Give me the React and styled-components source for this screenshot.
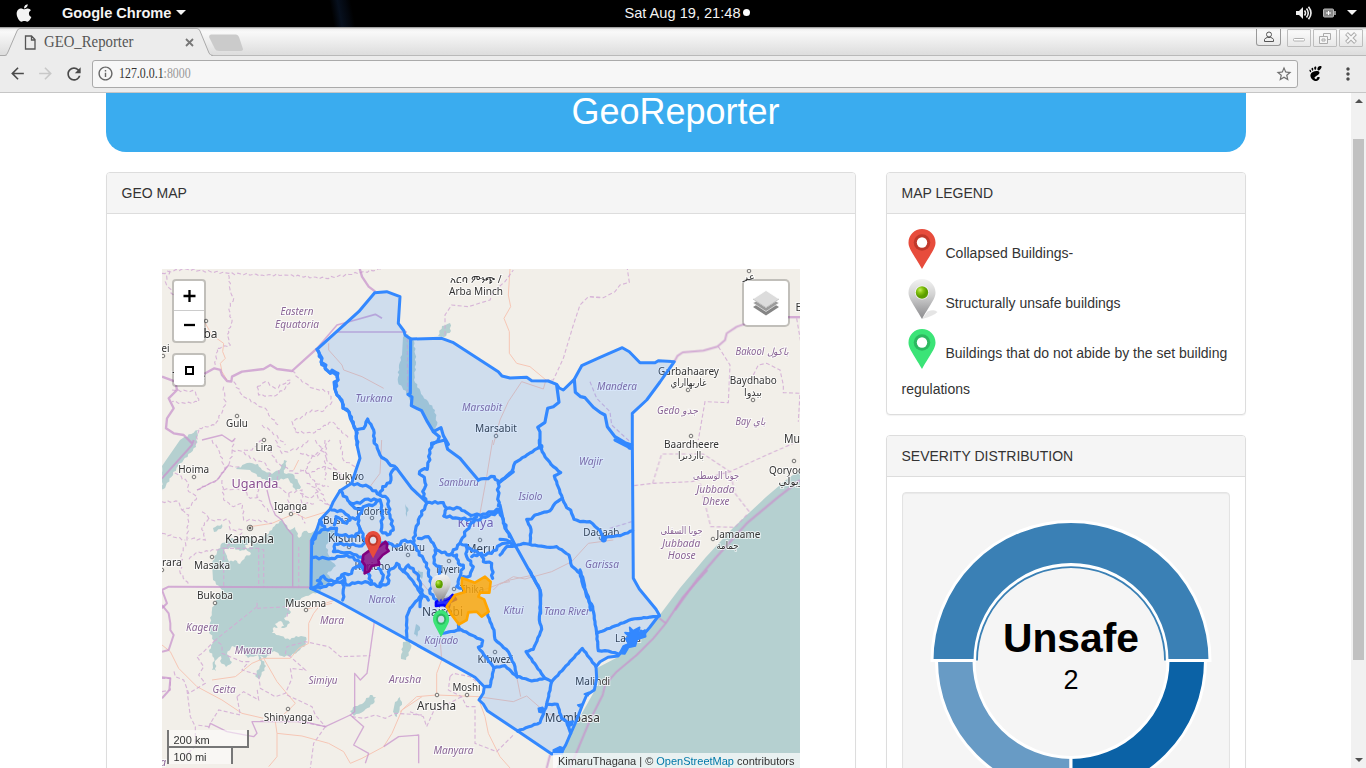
import React from "react";
import styled, { createGlobalStyle } from "styled-components";
import { FaApple } from "react-icons/fa";
import { SiGnome } from "react-icons/si";
import { MdArrowBack, MdArrowForward, MdRefresh, MdInfoOutline, MdStarBorder, MdMoreVert } from "react-icons/md";

const Global = createGlobalStyle`
  *, *::before, *::after { box-sizing: border-box; }
  body { margin: 0; background: #fff; overflow: hidden; }
`;

const Screen = styled.div`
  width: 1366px;
  height: 768px;
  overflow: hidden;
  display: flex;
  flex-direction: column;
  font-family: "Liberation Sans", Arial, sans-serif;
  font-size: 14px;
  line-height: 20px;
  color: #333;
`;

/* Desktop bar */
const DesktopBar = styled.header`
  flex: none;
  height: 27px;
  display: grid;
  grid-template-columns: 1fr auto 1fr;
  align-items: center;
  padding: 0 9px 2px 14px;
  background: linear-gradient(80deg, transparent 329px, #07101e 337px, #03070e 345px, transparent 350px) #000;
  color: #f4f4f4;
  font-size: 14.6px;
`;
const BarGroup = styled.div`
  display: flex;
  align-items: center;
  gap: ${(p) => p.$gap || 0}px;
  justify-content: ${(p) => (p.$end ? "flex-end" : "flex-start")};
`;
const AppName = styled.strong`
  margin: 0 5px 0 28px;
  white-space: nowrap;
`;
const Clock = styled.div`
  display: flex;
  align-items: center;
  gap: 2px;
  margin-left: 3px;
`;
const Dot = styled.i`
  width: 7px;
  height: 7px;
  border-radius: 50%;
  background: #fff;
`;

/* Browser frame */
const TabStrip = styled.div`
  flex: none;
  height: 29px;
  display: flex;
  background: linear-gradient(#8a8a8a 0, #f0f0f0 2px, #f9f9f9 5px, #dedede 27px);
  border-bottom: 1px solid #b9b9b9;
`;
const Tab = styled.div`
  position: relative;
  width: 214px;
  height: 29px;
  display: flex;
  align-items: center;
  padding: 1px 0 0 24px;
`;
const TabShape = styled.svg`
  position: absolute;
  left: 0;
  top: 0;
`;
const TabTitle = styled.span`
  position: relative;
  width: 141px;
  margin-left: 8px;
  font: 16.5px/20px "Liberation Serif", serif;
  color: #555;
`;
const Squeeze = styled.span`
  display: inline-block;
  transform: scaleX(${(p) => p.$x});
  transform-origin: 0 50%;
`;
const TabIcon = styled.svg`
  position: relative;
  flex: none;
`;
const WindowButtons = styled.div`
  display: flex;
  gap: 2px;
  margin: 2px 3px 0 auto;
`;
const WindowButton = styled.span`
  width: 24px;
  height: 18px;
  display: grid;
  place-items: center;
  border: 1px solid #bdbdbd;
  border-radius: 1px;
`;
const ProfileButton = styled(WindowButton)`
  width: 25px;
  height: 17px;
  margin-right: 4px;
  border-color: #999;
  border-top: 0;
  border-radius: 0 0 3px 3px;
`;
const Toolbar = styled.div`
  flex: none;
  height: 37px;
  display: flex;
  align-items: center;
  padding: 0 8px 1px;
  background: #ececec;
  border-bottom: 1px solid #c6c6c6;
  color: #4a4a4a;
  svg { flex: none; }
`;
const Omnibox = styled.div`
  flex: 1;
  height: 28px;
  margin: 0 10px 0 8px;
  padding: 0 4px;
  display: flex;
  align-items: center;
  background: #f7f7f7;
  border: 1px solid #aaa;
  border-radius: 3px;
`;
const Url = styled.span`
  flex: 1;
  margin: -2px 0 0 5px;
  font: 14.5px/20px "Liberation Serif", serif;
  color: #333;
`;
const Port = styled.span`
  color: #999;
`;

/* Page */
const Viewport = styled.div`
  flex: 1;
  min-height: 0;
  display: flex;
`;
const Page = styled.main`
  width: 1351px;
  overflow: hidden;
`;
const Container = styled.div`
  width: 1140px;
  margin: 0 auto;
`;
const Banner = styled.h1`
  height: 59px;
  margin: 0 0 20px;
  border-radius: 0 0 20px 20px;
  background: #3aacef;
  color: #fff;
  text-align: center;
  font-size: 36px;
  font-weight: 400;
  line-height: 37px;
`;
const Columns = styled.div`
  display: grid;
  grid-template-columns: 750px 360px;
  gap: 30px;
  align-items: start;
`;
const Panel = styled.section`
  margin-bottom: 20px;
  background: #fff;
  border: 1px solid #ddd;
  border-radius: 4px;
  box-shadow: 0 1px 1px rgba(0, 0, 0, 0.05);
`;
const PanelHeading = styled.div`
  padding: 10px 15px;
  background: #f5f5f5;
  border-bottom: 1px solid #ddd;
  border-radius: 3px 3px 0 0;
`;
const PanelBody = styled.div`
  padding: ${(p) => p.$pad || 15}px;
`;
const LegendRow = styled.div`
  display: flex;
  gap: 4px;
  height: 50px;
  white-space: nowrap;
`;
const LegendText = styled.span`
  margin-top: 14px;
`;
const Well = styled.div`
  height: 340px;
  border: 1px solid #e3e3e3;
  border-radius: 4px;
  background: #f5f5f5;
  box-shadow: inset 0 1px 1px rgba(0, 0, 0, 0.05);
`;
const Scrollbar = styled.div`
  width: 15px;
  display: flex;
  flex-direction: column;
  align-items: center;
  justify-content: space-between;
  padding: 6px 0 6px;
  background: #f1f1f1;
`;
const Thumb = styled.div`
  width: 11px;
  height: 521px;
  margin: -62px 0 0;
  background: #c1c1c1;
`;
const Caret = styled.i`
  border: solid transparent;
  border-width: 0 ${(p) => p.$w || 4}px;
  ${(p) => (p.$up ? "border-bottom" : "border-top")}: ${(p) => p.$w || 4}px solid ${(p) => p.$color || "#505050"};
`;

/* Map */
const MapFrame = styled.div`
  position: relative;
  height: 500px;
  overflow: hidden;
  background: #f2efe9;
`;
const MapSvg = styled.svg`
  display: block;
  font-family: "Noto Sans", "DejaVu Sans", sans-serif;
`;
const ControlStack = styled.div`
  position: absolute;
  left: 10px;
  top: 10px;
  display: flex;
  flex-direction: column;
  gap: 10px;
`;
const ControlBox = styled.div`
  border: 2px solid rgba(0, 0, 0, 0.2);
  border-radius: 4px;
  background: #fff;
  background-clip: padding-box;
`;
const ControlButton = styled.div`
  width: 30px;
  height: 30px;
  display: grid;
  place-items: center;
  &:not(:last-child) { border-bottom: 1px solid #ccc; }
`;
const LayersBox = styled(ControlBox)`
  position: absolute;
  right: 10px;
  top: 10px;
  width: 48px;
  height: 48px;
  display: grid;
  place-items: center;
  border-radius: 5px;
`;
const ScaleStack = styled.div`
  position: absolute;
  left: 5px;
  bottom: 5px;
  font-size: 11px;
  line-height: 12px;
`;
const ScaleLine = styled.div`
  width: ${(p) => p.$w}px;
  height: ${(p) => (p.$top ? 18 : 16)}px;
  padding: ${(p) => (p.$top ? 4 : 3)}px 5px 0 5px;
  border: 2px solid #777;
  border-top: 0;
  ${(p) => !p.$top && "border-bottom: 0;"}
  background: rgba(255, 255, 255, 0.5);
  white-space: nowrap;
`;
const Attribution = styled.div`
  position: absolute;
  right: 0;
  bottom: 0;
  padding: 0 5px;
  font-size: 11px;
  line-height: 16px;
  white-space: nowrap;
  background: rgba(255, 255, 255, 0.7);
`;
const Link = styled.a`
  color: #0078a8;
`;

const PIN = "M13.5 0C6 0 0 6 0 13.5c0 6 4 10 13.5 26.5C23 23.5 27 19.5 27 13.5 27 6 21 0 13.5 0z";

const PinShape = ({ color, ring, hole = "#fff" }) => (
  <g>
    <path d={PIN} fill={color} />
    <circle cx="13.5" cy="13.5" r="8.3" fill={ring} />
    <circle cx="13.5" cy="13.5" r="5.2" fill={hole} />
  </g>
);
const SilverPin = () => (
  <g>
    <path d="M13.5 40L19 32.500Q26 30 29 33Q25 37 13.5 40z" fill="#999" opacity=".25" />
    <path d={PIN} fill="url(#silver)" />
    <circle cx="13.5" cy="13.5" r="7" fill="#f4f4f4" />
    <circle cx="13.5" cy="13.5" r="6.2" fill="url(#lime)" />
  </g>
);
const LegendPin = ({ children }) => (
  <svg width="40" height="40" viewBox="-6.5 0 40 40" overflow="visible">{children}</svg>
);

/* Adds small, repeatable bends along each segment so that surveyed borders and shores look natural. */
const roughen = (points, step, amount) => {
  const nodes = points.split(" ").map((pair) => pair.split(",").map(Number));
  const out = [nodes[0]];
  for (let i = 1; i < nodes.length; i += 1) {
    const [ax, ay] = nodes[i - 1];
    const [bx, by] = nodes[i];
    const length = Math.hypot(bx - ax, by - ay) || 1;
    const parts = Math.max(1, Math.round(length / step));
    for (let k = 1; k < parts; k += 1) {
      const t = k / parts;
      const shift = Math.sin(ax * 12.9 + by * 7.3 + k * 2.4) * amount;
      out.push([ax + (bx - ax) * t - ((by - ay) / length) * shift, ay + (by - ay) * t + ((bx - ax) / length) * shift]);
    }
    out.push([bx, by]);
  }
  return out.map(([x, y]) => `${x.toFixed(1)},${y.toFixed(1)}`).join(" ");
};

/* Each sheet of the map is digitised at three units per pixel from its own origin. */
const Sheet = ({ x, y, ...rest }) => <g transform={`translate(${x} ${y}) scale(.33333)`} {...rest} />;
const Lines = ({ of, rough = 0 }) => of.map((points) => <polyline key={points} points={rough ? roughen(points, 9, rough) : points} />);

const OUTLINE =
  "317,349.3 358.7,311.7 374.7,292.7 386.7,291.7 400,296.7 398.3,323.3 404,331 405,335 410.7,339 441.7,338.3 452.7,342.3 498.3,371.7 502,376 510,378 526.7,377.3 531.7,380.7 548.3,381 556.7,384.3 559.3,388 563.3,390 574.3,379.3 581.7,365.7 600,357.3 622.3,347.7 629.3,351.7 640,362.7 655,362.7 658.3,360.7 674.3,361.7 660,382 646.7,400 632.3,413.3 632.3,440 633.3,578.3 639.3,589 656,609.3 659.3,615 656.7,618.3 650,627 645,633 641,631 638,638 633,640 628,645 623,650 618,656 608,657.3 600,661.7 596,666.7 596.7,678.3 594.3,690 586.7,695 581.7,706.7 576.7,720 570.7,733.3 565.7,745 562.7,750 551.7,754 517.7,731 487.3,710.7 483.3,704 479,700 483.3,693.3 484.3,686.7 475,677.3 406.7,639.3 335.3,600 311,588.3 311.7,540 316.7,530 320,520 330,509.3 333.3,501.7 340,490.7 351.7,483.3 356,470 360,458.3 357,445 356,430 350.3,418.3 348.7,411.7 343,408 342,400 337,395 334.7,388.3 334,382 338,380 337,373 332,370 330,373 325,368 326,365 321,362 322,358 319,353";

const CITY = "#333";
const AREA = "#8a6596";
/* text, centre x, baseline y, width, size, colour, italic */
const LABELS = [
  ["Eastern", 297, 315, 33, 10, AREA, 1], ["Equatoria", 297, 327.5, 44, 10, AREA, 1],
  ["አርባ ምንጭ /", 475.5, 282.5, 52, 10, CITY], ["Arba Minch", 476, 295, 54, 10.5, CITY],
  ["ba", 210.5, 338, 14, 12, CITY], ["ei", 165.5, 352, 8, 10, CITY], ["T", 176, 380, 7, 10, CITY], ["e", 202, 380, 6, 10, CITY],
  ["Gulu", 237, 427, 22, 10.5, CITY], ["Lira", 264, 451, 17, 10.5, CITY], ["Hoima", 193.7, 473, 31, 10.5, CITY],
  ["Uganda", 255, 488, 47, 12, "#8a4f92"], ["Iganga", 290.5, 510, 33, 10.5, CITY], ["Kampala", 249.5, 543, 49, 13, CITY],
  ["rara", 172, 566, 20, 10.5, CITY], ["Masaka", 212, 569, 36, 10.5, CITY], ["Bukoba", 215, 599, 36, 10.5, CITY],
  ["Musoma", 305.7, 606.5, 41, 10.5, CITY], ["Turkana", 374, 401.5, 37, 10, AREA, 1], ["Marsabit", 482, 410.5, 40, 10, AREA, 1],
  ["Marsabit", 496, 432, 42, 10.5, CITY], ["Mandera", 617, 389.5, 40, 10, AREA, 1], ["Garbahaarey", 688.5, 374.5, 61, 10.5, CITY],
  ["غاربهااراي", 688.5, 386, 36, 10, CITY], ["Baydhabo", 753.3, 384, 47, 10.5, CITY], ["بيدوا", 753, 395.5, 18, 10, CITY],
  ["عر", 749, 280, 12, 10, CITY], ["Bakool باكول", 762, 355, 53, 10, AREA, 1], ["Gedo جدو", 677.5, 414, 41, 10, AREA, 1],
  ["Bay باي", 750.5, 425, 30, 10, AREA, 1], ["Baardheere", 691.5, 447.5, 55, 10.5, CITY], ["بااردىرا", 691, 458.5, 26, 10, CITY],
  ["Mu", 792, 443, 16, 12, CITY], ["B", 799, 311, 7, 11, CITY], ["Qoryooley", 793, 473.5, 48, 10.5, CITY], ["قريولي", 794, 485, 31, 10, CITY],
  ["جوبا الوسطى", 716, 479, 46, 10, AREA], ["Jubbada", 715.5, 492.5, 38, 10.5, AREA, 1], ["Dhexe", 716, 504.5, 27, 10.5, AREA, 1],
  ["جوبا السفلى", 681.5, 534, 42, 10, AREA], ["Jubbada", 681.3, 547, 38, 10.5, AREA, 1], ["Hoose", 681.7, 559, 28, 10.5, AREA, 1],
  ["Jamaame", 738.5, 537.5, 44, 10.5, CITY], ["جمامة", 727.5, 548.5, 22, 10, CITY], ["Wajir", 591, 465, 24, 10, AREA, 1],
  ["Isiolo", 530.5, 500, 24, 10, AREA, 1], ["Dadaab", 601.3, 535.5, 36, 10.5, CITY], ["Garissa", 602, 568, 34, 10, AREA, 1],
  ["Bukwo", 348, 480, 32, 10.5, CITY], ["Samburu", 459, 486, 40, 10, AREA, 1], ["Kenya", 475.5, 527, 36, 12.5, "#7d59a5"],
  ["Eldoret", 372, 515, 32, 10.5, CITY], ["Busia", 336, 524, 26, 10.5, CITY], ["Kisumu", 348, 541.5, 40, 12, CITY],
  ["Nakuru", 408, 551, 34, 10.5, CITY], ["Meru", 480.5, 553, 29, 12.5, CITY], ["Kericho", 372.5, 570, 36, 10.5, CITY],
  ["Nyeri", 448, 573, 24, 10.5, CITY], ["Thika", 472, 593, 24, 10.5, CITY], ["Narok", 382, 603, 27, 10, AREA, 1],
  ["Nairobi", 442.5, 616, 41, 12.5, CITY], ["Kitui", 513.5, 613.5, 20, 10, AREA, 1], ["Tana River", 567, 615, 46, 10, AREA, 1],
  ["Kajiado", 441.3, 643.5, 34, 10, AREA, 1], ["Kibwezi", 495.5, 663, 36, 10.5, CITY], ["Lamu", 628, 641.5, 26, 10.5, CITY],
  ["Malindi", 592.7, 684.5, 35, 10.5, CITY], ["Mombasa", 572.3, 721.5, 55, 12.5, CITY], ["Moshi", 466.5, 691, 28, 10.5, CITY],
  ["Arusha", 436.5, 709.5, 39, 12.5, CITY], ["Arusha", 405, 682.5, 32, 10, AREA, 1], ["Manyara", 453.5, 754, 40, 10, AREA, 1],
  ["Kagera", 202, 631, 32, 10, AREA, 1], ["Mwanza", 253.3, 653.5, 37, 10, AREA, 1], ["Mara", 332, 624, 24, 10, AREA, 1],
  ["Simiyu", 323, 684, 29, 10, AREA, 1], ["Geita", 224, 692.5, 23, 10, AREA, 1], ["Shinyanga", 288.3, 720.5, 49, 10.5, CITY],
  ["a", 163, 766, 6, 10, AREA, 1],
];
const TOWNS = [
  [163, 356], [237, 416], [264, 440], [194, 477], [291, 514], [212, 557], [162, 570], [215, 603], [306, 610], [496, 436],
  [688, 390], [753, 400], [691, 436], [749, 271], [794, 461], [713, 539], [348, 483], [372, 518], [349, 547], [408, 555],
  [480, 540], [449, 561], [454, 589], [495, 652], [467, 695], [288, 709], [437, 695], [206, 321], [601, 538],
];

const OCEAN = "800,470 786,480 766,497 733,528 706,557 680,588 659,616 645,636 618,657 597,668 595,690 577,722 563,752 556,769 800,769";
const LAKES = [
  "212,563 217,552 222,543 232,538 242,540 250,537 256,543 266,535 272,530 276,524 282,520 290,530 295,527 299,538 304,531 311,533 320,526 332,530 337,535 326,545 330,560 336,566 327,574 332,580 318,592 306,596 295,602 285,607 291,612 284,618 290,623 284,628 274,627 272,633 281,636 290,640 296,636 306,637 306,644 300,650 291,656 282,656 274,651 266,658 260,656 266,666 259,679 255,676 261,664 258,655 248,658 239,648 232,646 227,654 232,662 226,667 220,661 221,656 215,661 216,671 212,670 214,658 209,650 214,641 209,631 212,610 216,600 222,590 213,580",
  "180,440 198,430 196,447 178,466 162,492 162,466",
  "403,337 408,334 414,341 416,362 414,380 423,396 435,410 437,425 433,432 423,413 412,405 408,395 398,382 399,365 402,355",
  "438,336 442,326 450,323 451,331 444,337",
  "350,711 355,706 362,704 370,695 376,697 373,704 364,711 354,716",
  "395,702 400,697 402,702 397,717 393,712",
  "401,659 403,642 410,639 411,648 406,660",
  "236,469 247,463 258,464 262,470 272,474 281,468 284,460 287,461 284,473 293,474 298,482 301,487 296,491 288,478 272,481 262,479 250,470",
  "405,504 408,508 407,517 406,511",
  "416,624 420,627 417,637 414,634",
  "213,528 222,524 221,529 214,532",
  "418,570 423,572 422,579 418,577",
];
const ISLANDS = ["224,550 232,547 240,551 246,549 251,554 245,557 240,564 235,560 229,562 227,556", "275,624 281,621 284,626 279,629", "245,545 251,543 252,547 246,548"];

function BaseMap() {
  return (
    <g fill="none">
      <g fill="#b5d0d0">
        <polygon points={OCEAN} />
        {LAKES.map((p) => <polygon key={p} points={roughen(p, 2.5, 0.9)} />)}
      </g>
      <g fill="#f2efe9">{ISLANDS.map((p) => <polygon key={p} points={roughen(p, 2, 0.8)} />)}</g>
      <g stroke="#f6c6b5" strokeWidth="3">
        <Sheet x={162} y={265}><Lines of={["130,175 150,210 185,235 182,260 190,280 175,295 180,320 195,345", "500,235 500,255 540,300 545,315 600,335 665,370"]} /></Sheet>
        <Sheet x={380} y={265}><Lines of={["390,12 385,90 392,125 372,160 388,200 388,265 410,295 450,305 498,345 490,372 425,350 385,410 360,465 340,540"]} /></Sheet>
        <Sheet x={162} y={440}><Lines of={["265,260 330,250 365,235 400,220 430,235 510,210", "410,60 395,90", "510,490 430,508"]} /></Sheet>
        <Sheet x={300} y={440}><Lines of={["245,0 240,100 210,140", "578,0 560,110 540,220", "580,450 600,430 630,425", "330,385 400,470"]} /></Sheet>
        <Sheet x={500} y={440}><Lines of={["0,433 40,410 75,417 155,395 215,365 265,310 340,300"]} /></Sheet>
        <Sheet x={162} y={600}>
          <Lines of={[
            "520,0 475,15 455,40 440,70 440,130 410,145 385,175 305,175 270,190 220,230 150,240", "305,175 345,245 370,275 400,310 380,330 340,365 345,400 420,408 500,430 545,455 565,490 600,475 665,440 690,400 720,330 780,290",
            "0,135 25,155 50,205 105,260 180,300 240,340 305,355", "345,400 345,470 320,500",
          ]} />
        </Sheet>
        <Sheet x={400} y={570}><Lines of={["0,425 50,380 110,375 235,380 340,395 380,378 440,430 500,445", "120,200 125,270 110,310 110,370", "235,385 255,440 265,490 300,560 330,594", "350,320 362,380", "250,60 330,30 400,15"]} /></Sheet>
      </g>
      <g stroke="#d3abd5" strokeWidth="3.4" strokeDasharray="12 7" opacity=".85">
        <Sheet x={162} y={265}>
          <Lines of={[
            "0,25 60,12 200,25 300,30 370,30 490,40 660,12", "200,30 205,80 215,100 200,130 210,170 195,210 205,240 165,250 160,300", "30,0 10,50 40,100",
            "215,350 240,390 285,420 310,430 320,450 350,480", "390,318 420,350 455,370 500,380 510,410 480,440 450,435 420,455 390,470 400,500", "285,365 310,350 340,370 385,345", "285,365 290,390 335,395 370,370 385,345",
            "185,365 190,420 160,480 110,490 100,540", "30,375 100,380 110,410 70,415 30,410", "400,500 450,505 510,470 560,520", "300,480 330,500 370,540",
          ]} rough={3} />
        </Sheet>
        <Sheet x={380} y={265}><Lines of={["195,210 195,150 215,120 265,125 330,105 340,80 375,50 400,15", "495,345 520,345 550,280 580,180 600,120 625,95 660,98", "82,220 83,380"]} /></Sheet>
        <Sheet x={590} y={265}><Lines of={["0,95 40,98 75,80 90,60 118,52 112,12", "385,245 420,300 415,413 345,410 325,525", "490,330 505,300 530,295 570,315 580,360 580,383 630,385 625,470", "620,160 632,230", "0,350 20,400 60,440 65,480 120,530"]} /></Sheet>
        <Sheet x={162} y={440}>
          <Lines rough={3} of={[
            "0,185 50,185 60,210 80,205 105,170 80,155 75,125 50,105 30,100", "200,75 210,40 215,0", "105,150 165,120 195,80 235,80", "150,0 170,30 190,90", "180,120 185,180 215,200 240,190 245,240 290,240 330,250", "210,30 245,35 265,55 310,70 325,100 320,140 290,130 285,170 320,215", "185,150 240,145 265,175 290,170",
            "120,215 150,240 200,240 205,270 240,270 230,300 185,325 100,340 80,360", "140,235 120,260 130,300 80,295", "60,210 80,225 75,300 60,340 55,400 80,435", "0,280 70,300",
            "320,30 350,70 400,100 430,90 450,50 480,30", "340,0 360,40 420,20 440,0", "430,90 460,130 500,140", "350,90 345,140 380,160 420,150 420,190 460,190", "460,130 470,180 510,200", "460,0 490,45 490,120", "300,0 270,30 240,30", "380,160 380,200 420,230 430,250",
          ]} />
          <Lines of={["185,325 290,325 305,330 305,440", "290,325 290,440", "185,330 185,440", "410,320 410,440"]} />
        </Sheet>
        <Sheet x={300} y={440}><Lines rough={3} of={["0,90 30,100 70,80 110,90 140,125", "0,40 50,50 90,0", "75,0 80,60 110,90", "20,130 60,150 80,190 95,200", "0,160 30,175 55,155", "120,0 130,60 165,80"]} /></Sheet>
        <Sheet x={500} y={440}><Lines of={["402,137 458,130 575,125 690,95 800,45 880,10", "458,130 485,42 610,42 690,95 705,160 750,218", "600,130 632,260 705,262 745,220", "330,265 395,245"]} /></Sheet>
        <Sheet x={162} y={600}>
          <Lines of={[
            "285,20 285,0", "285,20 160,120 180,135 180,160 240,185 260,185 240,210 290,225 295,265 340,290 370,280 390,235 385,205 430,210 385,170 370,160 375,140 430,125 500,140 535,170 625,167", "285,25 380,20 375,50",
            "160,120 120,160 105,170 125,200 110,225 130,250 80,280 65,240 40,230 35,210", "75,270 85,350 100,380 100,440 65,470", "225,290 245,275 290,300 285,265", "225,290 235,345 170,330 145,370", "375,285 450,320 460,345 490,380 440,370 345,355 290,365",
            "490,380 455,430 445,504", "570,350 605,355 640,345 670,355 700,340 780,345", "140,380 105,375", "0,275 25,270 25,235 0,235",
          ]} />
        </Sheet>
        <Sheet x={400} y={570}><Lines of={["150,320 160,310 210,320 250,350", "150,320 145,360 185,380 200,410 225,410 225,520 290,545 340,495", "185,380 100,425 80,470 70,440 30,425"]} /></Sheet>
      </g>
      <g stroke="#c894cc" strokeOpacity=".75" strokeLinejoin="round">
        <Sheet x={162} y={265} strokeWidth="7"><Lines of={["590,0 600,35 620,65 640,80", "465,250 390,318 345,312 325,300 305,312 240,320 210,335 208,350 195,348 180,330 175,315 157,310 130,325 60,350 40,350 0,335", "40,350 45,375 20,400 35,430 15,460 12,490 35,505 65,510 90,535"]} /></Sheet>
        <Sheet x={162} y={265} strokeWidth="5"><Lines of={["465,250 525,180 580,165 640,148 660,160"]} /></Sheet>
        <Sheet x={162} y={265} strokeWidth="4"><Lines of={["520,201 735,201", "120,525 180,510 210,530 220,520"]} /></Sheet>
        <Sheet x={590} y={265} strokeWidth="6"><Lines of={["253,290 262,273 278,262 340,257 382,245 405,225 410,205 440,185 500,165 560,157 632,157"]} /></Sheet>
        <Sheet x={162} y={440} strokeWidth="6"><Lines of={["95,0 90,15 0,115", "0,505 15,490 0,450 20,440 445,442 445,300"]} /></Sheet>
        <Sheet x={162} y={440} strokeWidth="4"><Lines of={["315,150 325,190 340,225 360,240 375,265 392,285 392,440", "105,150 165,120 200,75"]} /></Sheet>
        <Sheet x={500} y={440} strokeWidth="7"><Lines of={["900,120 830,175 740,250 650,350 590,420 525,510"]} /></Sheet>
        <Sheet x={400} y={570} strokeWidth="6"><Lines of={["922,0 850,80 797,160 760,205 710,255 650,305 615,345 608,375 570,450 510,594", "778,145 797,160", "450,555 440,594"]} /></Sheet>
        <Sheet x={162} y={600} strokeWidth="6"><Lines of={["0,15 20,40 25,70 25,90 35,105 20,150 0,155", "0,232 25,235 22,270 0,295"]} /></Sheet>
        <Sheet x={162} y={600} strokeWidth="4"><Lines of={["637,65 615,220 595,240 578,220 578,335 565,345 605,380 575,435 620,460 610,490", "565,345 490,380 425,365 270,365 285,400 275,410 195,395 145,370 140,385", "665,440 710,410 770,405 770,490"]} /></Sheet>
      </g>
      <g fill="#f2efe9" stroke="#555" strokeWidth=".8">{TOWNS.map(([x, y]) => <circle key={`${x}-${y}`} cx={x} cy={y} r="1.8" />)}</g>
      <g stroke="#555" strokeWidth=".8"><circle cx="250" cy="528" r="2.8" /><circle cx="250" cy="528" r="1" fill="#555" /></g>
      {LABELS.map(([text, x, y, width, size, color, italic]) => (
        <text key={text + x} x={x - width / 2} y={y} textLength={width} lengthAdjust="spacingAndGlyphs" fontSize={size} fontStyle={italic ? "italic" : "normal"}
          fill={color} stroke="#fff" strokeOpacity=".7" strokeWidth="2" paintOrder="stroke">{text}</text>
      ))}
    </g>
  );
}

function Counties() {
  return (
    <g fill="none" stroke="#3388ff" strokeWidth="9.5" strokeLinejoin="round" strokeLinecap="round">
      <polygon points={OUTLINE} fill="#3388ff" fillOpacity=".18" strokeWidth="3" />
      <Sheet x={162} y={265}>
        <Lines rough={3.5} of={["465,253 472,265 478,290 490,312 505,325 528,325 528,345 518,370 525,390 540,410 543,430 562,442 568,465 582,495 585,540"]} />
        <Lines rough={1.5} of={["582,495 605,490 617,462 635,495 637,530"]} />
      </Sheet>
      <Sheet x={380} y={265}>
        <Lines of={[
          "92,222 91,385 84,388 96,396 94,422 125,437 142,470 160,500 183,488 190,512 205,538", "160,500 178,515 173,528 155,540",
          "530,360 537,412 520,425 503,430 497,460 495,472 473,487 480,500 480,540", "583,343 586,382 602,395 615,398 640,427 660,442 675,450 682,485 705,515 735,533 755,540",
        ]} />
      </Sheet>
      <Sheet x={300} y={440}>
        <Lines rough={3} of={[
          "222,0 232,25 240,45 265,68 290,85", "380,187 430,188 440,205 480,205 500,218 512,226 550,222 600,208",
          "395,10 390,40 382,88 365,90 358,102 373,112 378,135 368,155 378,185", "535,120 583,110 595,130 595,197",
          "155,130 205,140 240,165 248,140 270,128 275,95 290,85", "240,165 262,175 270,225 280,270 262,285 243,272 248,215 240,180 195,178 180,190 150,188 120,152",
          "240,180 225,192 190,200 175,235 150,235 130,215 95,210", "150,190 165,205 185,205", "60,240 75,268 110,265 108,283 165,290 180,270 172,232", "103,255 108,230 140,250 150,240", "180,265 195,300 240,310 265,308",
          "38,310 50,280 75,268", "100,335 105,312 140,312 185,318 200,305", "105,335 140,338 170,345 190,358", "38,353 95,355 140,345 175,362 190,390",
          "33,445 65,432 52,422 70,408 85,422 110,425 125,405 155,400 160,385 190,375", "33,445 70,440 128,422 132,440 128,480", "128,405 140,435 165,430 195,425 240,440 250,405 235,385",
          "240,440 265,430 265,395 280,385 290,370 310,395 325,375 350,400 360,425 365,460 385,480", "205,400 215,430", "265,310 290,318 315,300 340,310 345,278 355,240 380,190",
          "350,330 380,370 385,400 395,430 390,460 410,480 425,475", "340,310 350,330", "355,295 385,290 400,310 410,330 450,345 480,310 500,270 530,230", "405,330 402,370 420,380 420,410 440,430 430,460",
          "432,228 440,205", "432,228 475,235 530,240 600,215 628,290", "445,345 470,345 475,370 490,375 480,410 470,440 490,445", "500,315 500,350 520,380 510,408 490,410", "480,310 510,325 545,345 575,340 600,315 630,305", "515,350 545,340 550,365 575,370 578,415",
          "365,460 360,500",
        ]} />
        <Lines of={["290,85 335,145 380,187", "395,10 435,0 443,28 480,55 505,85 535,120", "595,130 640,95"]} />
      </Sheet>
      <Sheet x={500} y={440}>
        <Lines rough={1} of={[
          "0,125 35,95 45,68 120,20 118,0", "120,20 135,50 160,80 182,98 163,108 187,175 200,203 212,210 222,238 240,245 270,245 300,272 312,295 325,290 360,287 398,272", "187,175 165,190 150,212 105,225 95,237 80,238 93,268 90,312",
          "0,345 20,320 45,318 70,310 115,318 150,322 170,320 207,345 215,378 240,400 250,440 265,470 272,510", "0,298 20,300 45,318",
        ]} />
        <Lines of={["0,195 15,265 30,285 45,315 120,450 122,520", "345,0 392,24"]} />
        <g fill="#3388ff" strokeWidth="5"><circle cx="311" cy="298" r="7" /><circle cx="122" cy="20" r="6" /><circle cx="390" cy="22" r="5" /></g>
      </Sheet>
      <Sheet x={400} y={570}>
        <Lines rough={1} of={[
          "388,0 418,55 423,75 418,150 425,178 400,238 378,245 435,325 455,335 547,235 588,290", "540,0 550,30 560,80 578,110 585,155 590,190 595,242 625,243 655,252", "590,190 695,148 778,138",
          "262,130 270,155 282,180 285,208 325,245 345,290 350,318 395,333 435,325", "455,335 440,405 420,458 353,483", "440,403 472,403 485,445 500,455 512,490", "175,175 248,212 245,228 235,232 282,293 270,350 253,350", "282,293 315,287 352,322", "20,208 20,140 30,115 65,75 40,35 10,0", "125,190 180,180 175,165",
        ]} />
      </Sheet>
      <Sheet x={400} y={570} fill="#3388ff" strokeWidth="5"><path d="M658 250l12-22 15-7-8-15 10-6-12-12 16 1-2-17 10 10 20-10-4 20 20-12 2 20-25 8-6 20-20 4-12 20zM460 540l20-10 12 5-5 16-27 2zM502 456l18-3-4 13-8 3-2 10zM553 372l14-5-3 10zM533 405l13-3-8 8zM415 415l13-3 5 8-8 8-8-2z" /></Sheet>
    </g>
  );
}

const MapPin = ({ x, y, children }) => <g transform={`translate(${x} ${y}) scale(.6 .68)`}>{children}</g>;

function KenyaMap() {
  return (
    <MapSvg width="638" height="500" viewBox="162 269 638 500">
      <defs>
        <linearGradient id="silver" x1="0" y1="0" x2="0" y2="1"><stop offset="0" stopColor="#f2f2f2" /><stop offset=".4" stopColor="#d2d2d2" /><stop offset=".75" stopColor="#a6a6a8" /><stop offset="1" stopColor="#8c8c8e" /></linearGradient>
        <radialGradient id="lime" cx=".35" cy=".3"><stop offset="0" stopColor="#c4ee5e" /><stop offset=".5" stopColor="#86c410" /><stop offset="1" stopColor="#5c9e00" /></radialGradient>
      </defs>
      <BaseMap />
      <Counties />
      <g strokeWidth="8" fillOpacity=".8" strokeLinejoin="round">
        <Sheet x={300} y={440} fill="#800080" stroke="#800080"><polygon points="190,345 208,332 240,318 256,305 262,312 260,325 266,333 248,345 235,360 238,373 215,378 208,393 194,400 196,377 187,365" /></Sheet>
        <Sheet x={300} y={440} fill="#0000ff" stroke="#0000ff"><polygon points="408,486 425,475 435,480 448,474 458,465 468,478 450,486 446,503 430,495 408,498" /></Sheet>
        <Sheet x={400} y={570} fill="#ffa500" stroke="#ffa500"><polygon points="186,24 225,38 255,20 272,35 268,68 240,68 235,80 252,88 266,125 245,140 230,125 205,127 200,150 177,163 152,130 140,110 165,75 195,66 185,45" /></Sheet>
      </g>
      <MapPin x={365} y={531}><PinShape color="#e74c3c" ring="#c0392b" hole="#e2dfe8" /></MapPin>
      <MapPin x={434.5} y={574}><SilverPin /></MapPin>
      <MapPin x={431} y={575}><SilverPin /></MapPin>
      <MapPin x={433} y={610}><PinShape color="#3be477" ring="#2db860" hole="#cedbec" /></MapPin>
    </MapSvg>
  );
}

function MapWidget() {
  return (
    <MapFrame>
      <KenyaMap />
      <ControlStack>
        <ControlBox>
          <ControlButton><svg width="14" height="14"><path d="M7.500 1v12M1.500 7h12" stroke="#000" strokeWidth="2.3" /></svg></ControlButton>
          <ControlButton><svg width="14" height="14"><path d="M2 6h11" stroke="#000" strokeWidth="2.3" /></svg></ControlButton>
        </ControlBox>
        <ControlBox>
          <ControlButton><svg width="10" height="10"><path d="M2 2h7v7H2z" fill="none" stroke="#000" strokeWidth="2" /></svg></ControlButton>
        </ControlBox>
      </ControlStack>
      <LayersBox>
        <svg width="26" height="26" viewBox="0 0 26 26">
          <path d="M0 17L13 9l13 8-13 8.500z" fill="#858585" />
          <path d="M0 13L13 5l13 8-13 8.500z" fill="#9b9b9b" stroke="#fff" strokeWidth=".6" />
          <path d="M0 9L13 .500l13 8.500-13 8.500z" fill="#dcdcdc" stroke="#fff" strokeWidth=".7" />
          <path d="M0 9l13 8.500 13-8.500" fill="none" stroke="#b5b5b5" strokeWidth=".8" />
        </svg>
      </LayersBox>
      <ScaleStack>
        <ScaleLine $w={82} $top>200 km</ScaleLine>
        <ScaleLine $w={66}>100 mi</ScaleLine>
      </ScaleStack>
      <Attribution>KimaruThagana | © <Link>OpenStreetMap</Link> contributors</Attribution>
    </MapFrame>
  );
}

function SeverityChart() {
  return (
    <svg width="326" height="330" viewBox="0 0 326 330">
      <g transform="translate(168 167.5)">
        <g stroke="#fff" strokeWidth="3">
          <path d="M-134.500 0A134.500 134.500 0 0 0 0 134.500V97A97 97 0 0 1-97 0z" fill="#689bc5" />
          <path d="M134.500 0A134.500 134.500 0 0 1 0 134.500V97A97 97 0 0 0 97 0z" fill="#0b62a6" />
          <path d="M-139 0A138.500 138.500 0 0 1 139 0H96A96 96 0 0 0-96 0z" fill="#3a80b5" />
        </g>
        <path d="M-94 0A94 93.500 0 0 1 94 0" fill="none" stroke="#3a80b5" strokeWidth="1.800" />
        <text y="-9" textAnchor="middle" fontSize="40.800" fontWeight="bold" fill="#000">Unsafe</text>
        <text y="28" textAnchor="middle" fontSize="27" fill="#000">2</text>
      </g>
    </svg>
  );
}

export default function App() {
  return (
    <Screen>
      <Global />
      <DesktopBar>
        <BarGroup>
          <FaApple size={20} />
          <AppName>Google Chrome</AppName>
          <Caret $w={5} $color="#f4f4f4" />
        </BarGroup>
        <Clock>Sat Aug 19, 21:48<Dot /></Clock>
        <BarGroup $end $gap={11}>
          <svg width="17" height="14" fill="none" stroke="#eee" strokeWidth="1.600"><path d="M1 5h3l4-4v12L4 9H1z" fill="#eee" stroke="none" /><path d="M9.500 4.500q2 2.500 0 5M11.500 2.500q3.500 4.500 0 9M13.500.700q5 6.300 0 12.600" /></svg>
          <svg width="13" height="10"><rect x=".5" y="1" width="10" height="8" rx="1" fill="#888" stroke="#bbb" /><path d="M12 3v4" stroke="#bbb" strokeWidth="1.500" /><path d="M3 5h5M5.500 3v4" stroke="#fff" /></svg>
          <Caret $w={5} $color="#f4f4f4" />
        </BarGroup>
      </DesktopBar>
      <TabStrip>
        <Tab>
          <TabShape width="250" height="29" overflow="visible">
            <path d="M0 28.500H5Q7 28 8 25L17 4Q18 1.500 20 1.500H197Q199 1.500 200 4L209 26Q210 28.500 213 28.500" fill="#ececec" stroke="#aaa" />
            <path d="M7 29H211" stroke="#ececec" strokeWidth="2" />
            <path d="M211 7.500H236Q238 7.500 239 10L243 22Q243 24 240 24H219Q216 24 215 22L209 10Q209 7.500 211 7.500z" fill="#cbcbcb" />
          </TabShape>
          <TabIcon width="12" height="15"><path d="M1.500 1h6L11 4.500V14H1.500zM7.500 1v4H11" fill="none" stroke="#555" strokeWidth="1.300" /></TabIcon>
          <TabTitle><Squeeze $x={0.895}>GEO_Reporter</Squeeze></TabTitle>
          <TabIcon width="9" height="9"><path d="M1 1l7 7M8 1L1 8" stroke="#777" strokeWidth="1.800" /></TabIcon>
        </Tab>
        <WindowButtons>
          <ProfileButton><svg width="12" height="12" fill="none" stroke="#555"><circle cx="6" cy="3.500" r="2.500" /><path d="M1.500 10.500V8.500Q2.500 6.500 4.500 6.500H7.500Q9.500 6.500 10.500 8.500V10.500z" /></svg></ProfileButton>
          <WindowButton><svg width="12" height="12"><rect x=".5" y="6.500" width="11" height="2.500" rx="1" fill="#fff" stroke="#b0b0b0" /></svg></WindowButton>
          <WindowButton><svg width="12" height="11" fill="#f5f5f5" stroke="#aaa"><path d="M4.500.5h7v6h-7z" /><path d="M.5 3.500h8v7h-8zM3 6h3v2H3z" /></svg></WindowButton>
          <WindowButton><svg width="12" height="12"><path d="M1.500 1.500l9 9M10.500 1.500l-9 9" stroke="#aaa" strokeWidth="4" /><path d="M2 2l8 8M10 2l-8 8" stroke="#f8f8f8" strokeWidth="2" /></svg></WindowButton>
        </WindowButtons>
      </TabStrip>
      <Toolbar>
        <BarGroup $gap={9}>
          <MdArrowBack size={19} />
          <MdArrowForward size={19} color="#c8c8c8" />
          <MdRefresh size={20} />
        </BarGroup>
        <Omnibox>
          <MdInfoOutline size={17} color="#666" />
          <Url><Squeeze $x={0.82}>127.0.0.1<Port>:8000</Port></Squeeze></Url>
          <MdStarBorder size={18} color="#707070" />
        </Omnibox>
        <BarGroup $gap={15}>
          <SiGnome size={15} color="#000" />
          <MdMoreVert size={20} />
        </BarGroup>
      </Toolbar>
      <Viewport>
        <Page>
          <Container>
            <Banner>GeoReporter</Banner>
            <Columns>
              <Panel>
                <PanelHeading>GEO MAP</PanelHeading>
                <PanelBody $pad={55}><MapWidget /></PanelBody>
              </Panel>
              <div>
                <Panel>
                  <PanelHeading>MAP LEGEND</PanelHeading>
                  <PanelBody>
                    <LegendRow><LegendPin><PinShape color="#e74c3c" ring="#c0392b" /></LegendPin><LegendText>Collapsed Buildings-</LegendText></LegendRow>
                    <LegendRow><LegendPin><SilverPin /></LegendPin><LegendText>Structurally unsafe buildings</LegendText></LegendRow>
                    <LegendRow><LegendPin><PinShape color="#3be477" ring="#2db860" /></LegendPin><LegendText>Buildings that do not abide by the set building</LegendText></LegendRow>
                    regulations
                  </PanelBody>
                </Panel>
                <Panel>
                  <PanelHeading>SEVERITY DISTRIBUTION</PanelHeading>
                  <PanelBody><Well><SeverityChart /></Well></PanelBody>
                </Panel>
              </div>
            </Columns>
          </Container>
        </Page>
        <Scrollbar>
          <Caret $up />
          <Thumb />
          <Caret />
        </Scrollbar>
      </Viewport>
    </Screen>
  );
}
